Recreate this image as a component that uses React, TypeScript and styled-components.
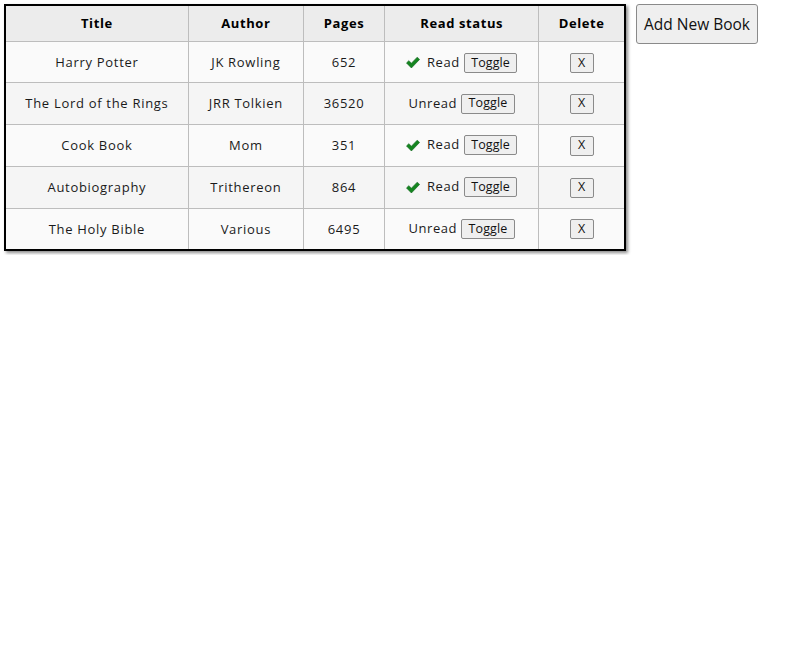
import React from "react";
import styled, { createGlobalStyle } from "styled-components";

const Global = createGlobalStyle`
  html, body { margin: 0; padding: 0; background: #fff; }
  body { font-family: "Open Sans", "Noto Sans", sans-serif; color: #000; }
`;

const Page = styled.div`
  display: flex;
  align-items: flex-start;
  gap: 10px;
  padding: 4px;
`;

const Table = styled.table`
  border-collapse: collapse;
  table-layout: fixed;
  width: 622px;
  border: 2px solid #000;
  box-shadow: 2px 2px 3px rgba(0, 0, 0, 0.45);
  font-size: 13px;
  letter-spacing: 0.7px;
`;

const Head = styled.th`
  height: 33px;
  padding: 0 0 2px;
  background: #ececec;
  border: 1px solid #bdbdbd;
  font-size: 13px;
  font-weight: 700;
  text-align: center;
  letter-spacing: 0.6px;
`;

const Row = styled.tr<{ $h: number; $alt: boolean }>`
  height: ${(p) => p.$h}px;
  background: ${(p) => (p.$alt ? "#f5f5f5" : "#fafafa")};
`;

const Cell = styled.td`
  padding: 0 0 1px;
  border: 1px solid #bdbdbd;
  text-align: center;
  color: #1a1a1a;
  tr:last-child > & {
    padding: 0;
  }
`;

const ButtonCell = styled.td<{ $pad: number }>`
  padding: ${(p) => p.$pad}px 0 0;
  border: 1px solid #bdbdbd;
  text-align: center;
  color: #1a1a1a;
`;

const Status = styled.span`
  display: inline-flex;
  align-items: center;
  justify-content: center;
  gap: 4px;
`;

const Label = styled.span`
  margin-bottom: 2px;
  letter-spacing: 0.55px;
`;

const Check = styled.svg`
  width: 14px;
  height: 13px;
  margin-right: 3px;
`;

const SmallButton = styled.button`
  height: 20px;
  padding: 0 6.5px;
  border: 1px solid #8a8a8a;
  border-radius: 2px;
  background: #efefef;
  font-family: inherit;
  font-size: 12.5px;
  line-height: 1;
  letter-spacing: 0.1px;
  color: #111;
`;

const DeleteButton = styled(SmallButton)`
  width: 24px;
  padding: 0;
`;

const AddButton = styled.button`
  width: 122px;
  height: 40px;
  padding: 0;
  border: 1px solid #8a8a8a;
  border-radius: 3px;
  background: #efefef;
  font-family: inherit;
  font-size: 15.5px;
  color: #111;
`;

const books = [
  { title: "Harry Potter", author: "JK Rowling", pages: 652, read: true, h: 41, pad: 2 },
  { title: "The Lord of the Rings", author: "JRR Tolkien", pages: 36520, read: false, h: 42, pad: 0 },
  { title: "Cook Book", author: "Mom", pages: 351, read: true, h: 42, pad: 0 },
  { title: "Autobiography", author: "Trithereon", pages: 864, read: true, h: 42, pad: 0 },
  { title: "The Holy Bible", author: "Various", pages: 6495, read: false, h: 41, pad: 1 },
];

export default function App() {
  return (
    <>
      <Global />
      <Page>
        <Table>
          <colgroup>
            <col width={183} />
            <col width={115} />
            <col width={81} />
            <col width={154} />
            <col width={86} />
          </colgroup>
          <thead>
            <tr>
              <Head>Title</Head>
              <Head>Author</Head>
              <Head>Pages</Head>
              <Head>Read status</Head>
              <Head>Delete</Head>
            </tr>
          </thead>
          <tbody>
            {books.map((b, i) => (
              <Row key={b.title} $h={b.h} $alt={i % 2 === 1}>
                <Cell>{b.title}</Cell>
                <Cell>{b.author}</Cell>
                <Cell>{b.pages}</Cell>
                <ButtonCell $pad={b.pad}>
                  <Status>
                    {b.read && (
                      <Check viewBox="0 0 15 13">
                        <path d="M0.5 7 L3 4.5 L5.8 7.2 L12 0.8 L14.6 3.2 L5.8 12.4 Z" fill="#14851f" stroke="#0f5f1c" strokeWidth="0.6" />
                      </Check>
                    )}
                    <Label>{b.read ? "Read" : "Unread"}</Label>
                    <SmallButton>Toggle</SmallButton>
                  </Status>
                </ButtonCell>
                <ButtonCell $pad={b.pad}>
                  <DeleteButton>X</DeleteButton>
                </ButtonCell>
              </Row>
            ))}
          </tbody>
        </Table>
        <AddButton>Add New Book</AddButton>
      </Page>
    </>
  );
}
